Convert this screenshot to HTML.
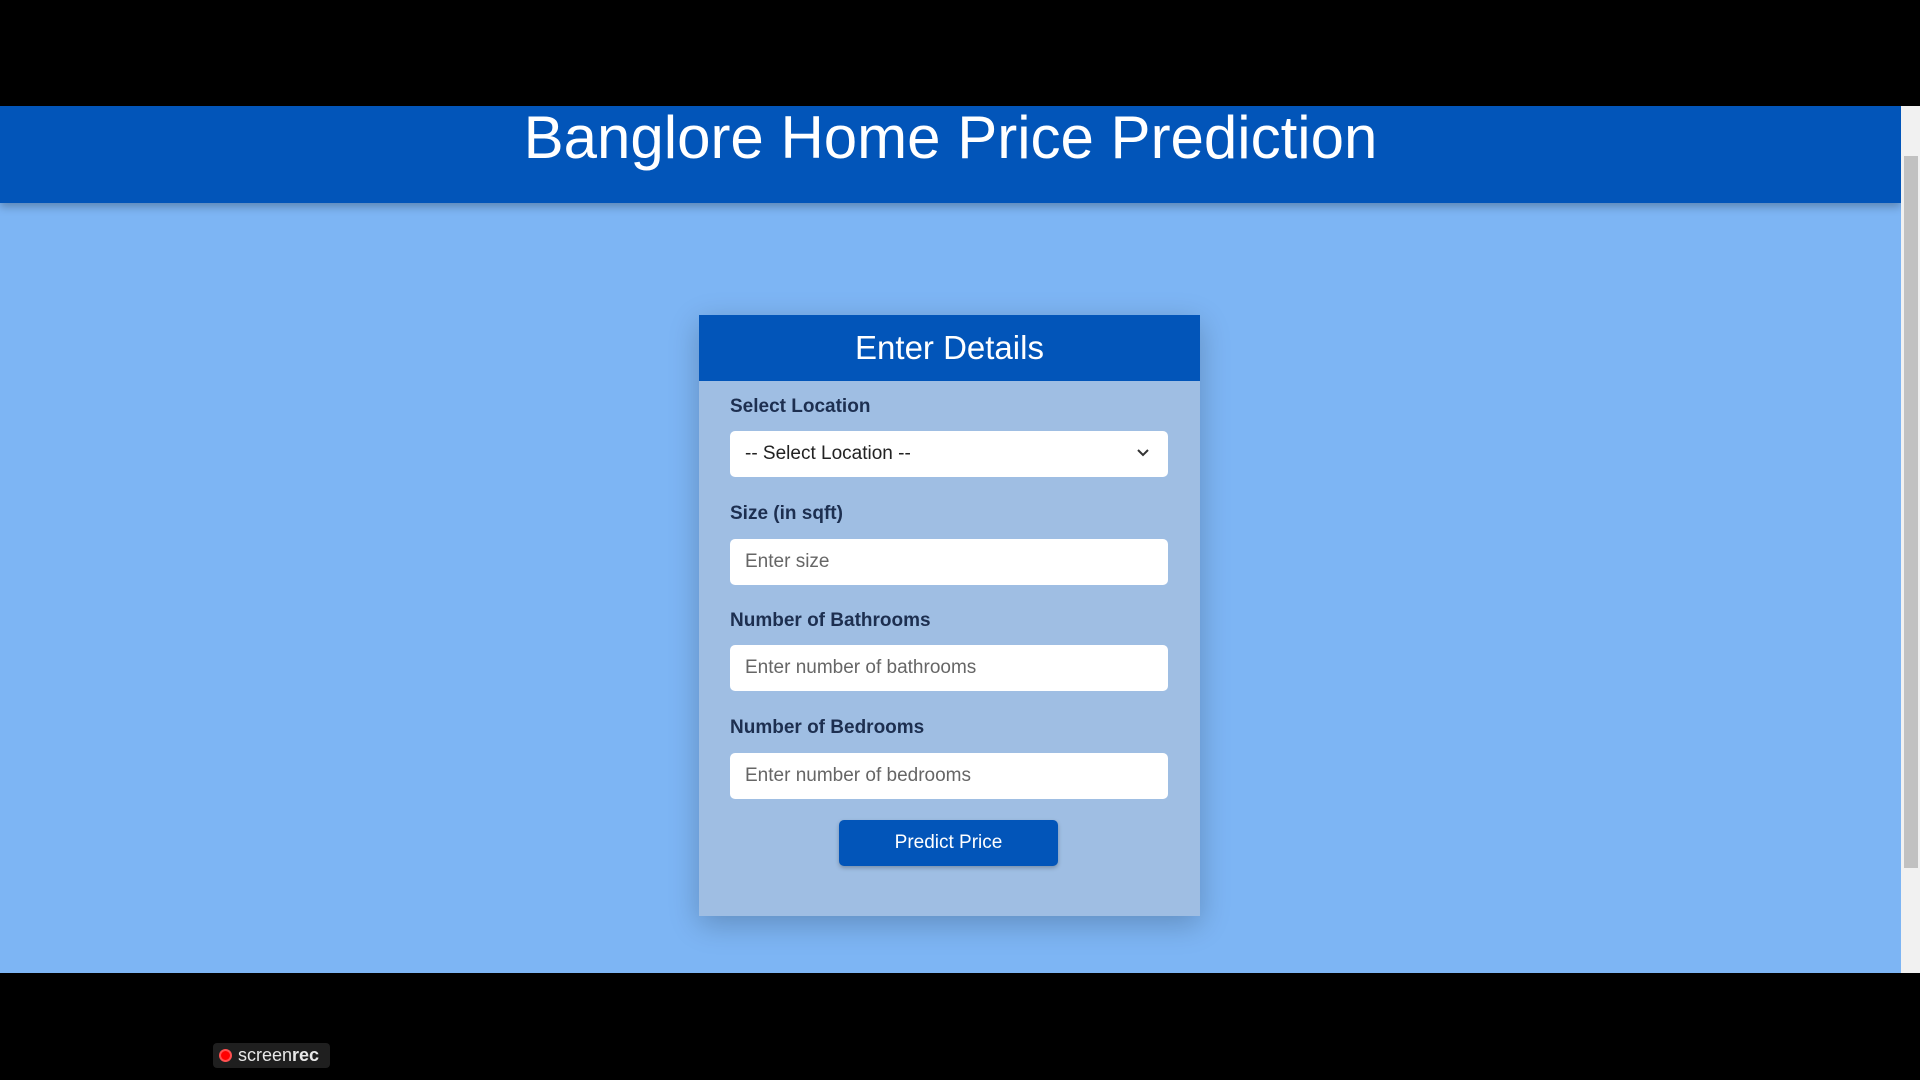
<!DOCTYPE html>
<html><head><meta charset="utf-8"><style>
*{margin:0;padding:0;box-sizing:border-box}
body{width:1920px;height:1080px;background:#000;position:relative;overflow:hidden;font-family:"Liberation Sans",Arial,sans-serif}
.page{position:absolute;left:0;top:106px;width:1901px;height:867px;background:#7db5f4}
.hdr{position:absolute;left:0;top:0;width:1901px;height:97px;background:#0255b9;box-shadow:0 4px 8px rgba(0,0,0,.25);color:#fff;text-align:center;font-size:60px;line-height:60px;padding-top:2px}
.sb{position:absolute;left:1901px;top:106px;width:19px;height:867px;background:#f1f1f1}
.thumb{position:absolute;left:3px;top:50px;width:14px;height:712px;background:#c1c1c1}
.card{position:absolute;left:699px;top:209px;width:501px;height:601px;background:#9fbee3;box-shadow:0 8px 28px rgba(0,0,0,.22)}
.ch{height:66px;background:#0255b9;color:#fff;text-align:center;font-size:33px;line-height:66px}
label{position:absolute;left:31px;font-size:19px;font-weight:bold;color:#1d2f50}
.in{position:absolute;left:31px;width:438px;height:46px;background:#fff;border-radius:5px;font-size:19px;color:#666;padding-left:15px;line-height:46px}
.sel{color:#222}
.btn{position:absolute;left:140px;top:505px;width:219px;height:46px;background:#0255b9;border-radius:5px;color:#fff;font-size:19px;text-align:center;line-height:46px;box-shadow:0 2px 4px rgba(0,0,0,.25)}
.rec{position:absolute;left:213px;top:1043px;width:117px;height:25px;background:#1f1f1f;border-radius:4px;color:#e8e8e8;font-size:18px;line-height:25px;padding-left:25px}
.rec i{position:absolute;left:6px;top:6px;width:13px;height:13px;border-radius:50%;background:#f00;border:2px solid #ff5050}
</style></head><body>
<div class="page">
<div class="hdr">Banglore Home Price Prediction</div>
<div class="card">
<div class="ch">Enter Details</div>
<label style="top:81px">Select Location</label>
<div class="in sel" style="top:116px">-- Select Location --<svg style="position:absolute;right:18px;top:17px" width="14" height="10" viewBox="0 0 14 10"><path d="M2 2l5 5 5-5" stroke="#333" stroke-width="2" fill="none"/></svg></div>
<label style="top:188px">Size (in sqft)</label>
<div class="in" style="top:224px">Enter size</div>
<label style="top:295px">Number of Bathrooms</label>
<div class="in" style="top:330px">Enter number of bathrooms</div>
<label style="top:402px">Number of Bedrooms</label>
<div class="in" style="top:438px">Enter number of bedrooms</div>
<div class="btn">Predict Price</div>
</div>
</div>
<div class="sb"><div class="thumb"></div></div>
<div class="rec"><i></i>screen<b>rec</b></div>
</body></html>
